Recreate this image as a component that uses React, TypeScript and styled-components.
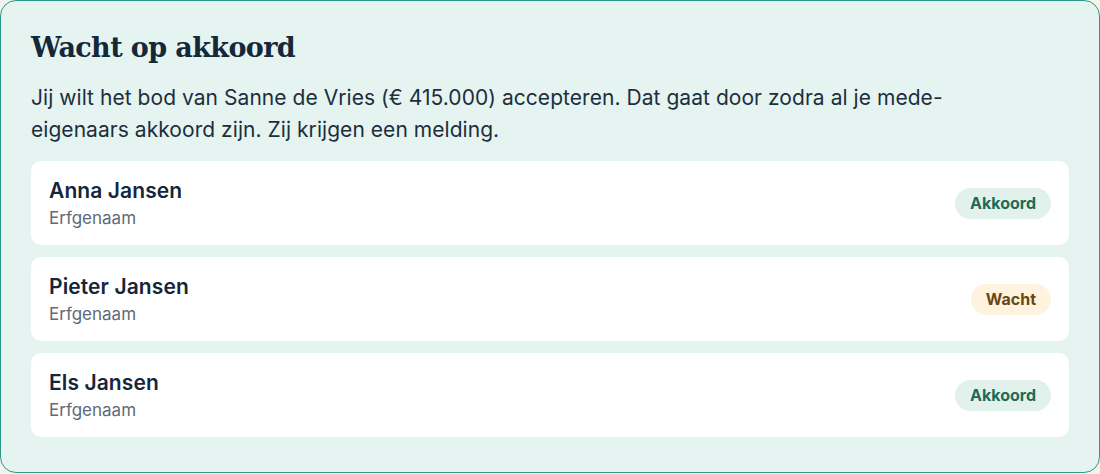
import { FC } from "react";
import styled, { createGlobalStyle } from "styled-components";

const GlobalStyle = createGlobalStyle`
  html, body {
    margin: 0;
    padding: 0;
    background: #f4f2ec;
  }
  * {
    box-sizing: border-box;
  }
`;

type Status = "akkoord" | "wacht";

type Owner = {
  name: string;
  role: string;
  status: Status;
};

const owners: Owner[] = [
  { name: "Anna Jansen", role: "Erfgenaam", status: "akkoord" },
  { name: "Pieter Jansen", role: "Erfgenaam", status: "wacht" },
  { name: "Els Jansen", role: "Erfgenaam", status: "akkoord" },
];

const Panel = styled.section`
  width: 1100px;
  height: 473px;
  padding: 30px 30px 0 30px;
  background: #e5f4f0;
  border: 1px solid #2b9b87;
  border-radius: 16px;
  font-family: Inter, "Noto Sans", sans-serif;
  color: #1b2c3c;
`;

const Title = styled.h2`
  margin: 0;
  font-family: "DejaVu Serif", "Liberation Serif", serif;
  font-size: 27px;
  line-height: 34px;
  font-weight: 700;
  color: #15283a;
  letter-spacing: -0.6px;
`;

const Intro = styled.p`
  margin: 17px 0 15px;
  font-size: 21px;
  letter-spacing: 0.05px;
  line-height: 32px;
  color: #1d2e3e;
`;

const List = styled.div`
  display: flex;
  flex-direction: column;
  gap: 12px;
`;

const Row = styled.div`
  display: flex;
  align-items: center;
  justify-content: space-between;
  height: 84px;
  padding: 0 18px;
  background: #ffffff;
  border-radius: 10px;
`;

const Person = styled.div`
  display: flex;
  flex-direction: column;
  gap: 3px;
`;

const Name = styled.div`
  font-size: 21px;
  letter-spacing: 0.1px;
  line-height: 26px;
  font-weight: 600;
  color: #15263a;
`;

const Role = styled.div`
  font-size: 17px;
  line-height: 22px;
  color: #5f6b76;
`;

const Badge = styled.span<{ $status: Status }>`
  display: inline-flex;
  align-items: center;
  height: 31px;
  padding: 0 15px;
  border-radius: 999px;
  font-size: 16px;
  font-weight: 700;
  background: ${(p) => (p.$status === "akkoord" ? "#e1f2ec" : "#fdf3df")};
  color: ${(p) => (p.$status === "akkoord" ? "#1d6b55" : "#6a4712")};
`;

const App: FC = () => (
  <>
    <GlobalStyle />
    <Panel>
      <Title>Wacht op akkoord</Title>
      <Intro>
        Jij wilt het bod van Sanne de Vries (€ 415.000) accepteren. Dat gaat door zodra al je mede-
        <br />
        eigenaars akkoord zijn. Zij krijgen een melding.
      </Intro>
      <List>
        {owners.map((o) => (
          <Row key={o.name}>
            <Person>
              <Name>{o.name}</Name>
              <Role>{o.role}</Role>
            </Person>
            <Badge $status={o.status}>{o.status === "akkoord" ? "Akkoord" : "Wacht"}</Badge>
          </Row>
        ))}
      </List>
    </Panel>
  </>
);

export default App;
